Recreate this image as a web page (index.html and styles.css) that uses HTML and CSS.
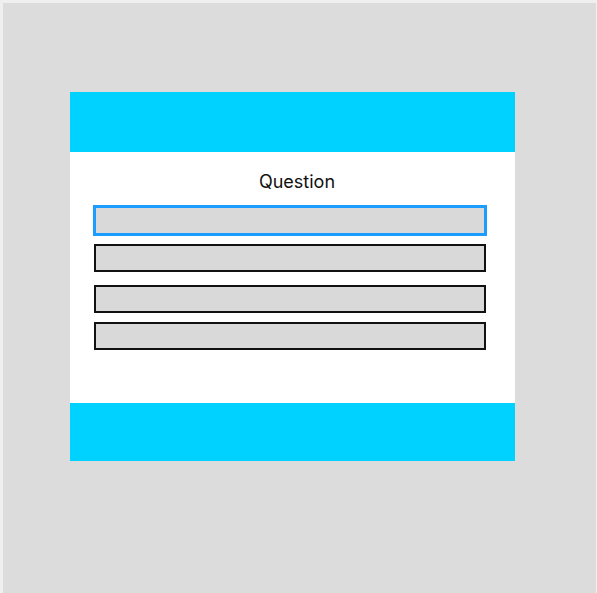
FILE: index.html
```html
<!DOCTYPE html>
<html lang="en">
<head>
    <meta charset="UTF-8">
    <meta name="viewport" content="width=device-width, initial-scale=1.0">
    <title>Quiz</title>
    <link rel="stylesheet" href="styles.css">
</head>
<body>
    <div class="frame">
        <div class="card">
            <header class="card-header"></header>
            <main class="card-body">
                <h2 class="question">Question</h2>
                <input class="answer answer-focus" type="text" />
                <input class="answer" type="text" />
                <input class="answer answer-gap" type="text" />
                <input class="answer" type="text" />
            </main>
            <footer class="card-footer"></footer>
        </div>
    </div>
</body>
</html>
```

FILE: styles.css
```css
body {
    margin: 0;
    padding: 0;
    font-family: Inter, "Noto Sans", sans-serif;
    background-color: #dcdcdc;
}

.frame {
    box-sizing: border-box;
    height: 593px;
    border-top: 3px solid #efefef;
    border-left: 3px solid #efefef;
    border-right: 1px solid #efefef;
    background-color: #dcdcdc;
    padding-top: 89px;
}

.card {
    width: 445px;
    margin-left: 67px;
    background-color: #ffffff;
}

.card-header {
    height: 60px;
    background-color: #00d2ff;
}

.card-footer {
    height: 58px;
    background-color: #00d2ff;
}

.card-body {
    height: 251px;
    box-sizing: border-box;
    padding: 20px 0 0 24px;
    display: flex;
    flex-direction: column;
}

.question {
    margin: 0 0 13px 0;
    width: 406px;
    text-align: center;
    font-size: 18px;
    font-weight: 400;
    line-height: 20px;
    color: #111;
}

.answer {
    box-sizing: border-box;
    width: 392px;
    height: 28px;
    margin: 0 0 9px 0;
    padding: 0;
    border: 2px solid #111;
    background-color: #d9d9d9;
    outline: none;
}

.answer-focus {
    width: 394px;
    height: 31px;
    margin-left: -1px;
    margin-bottom: 8px;
    border: 3px solid #1a9dff;
}

.answer-gap {
    margin-top: 4px;
}
```
